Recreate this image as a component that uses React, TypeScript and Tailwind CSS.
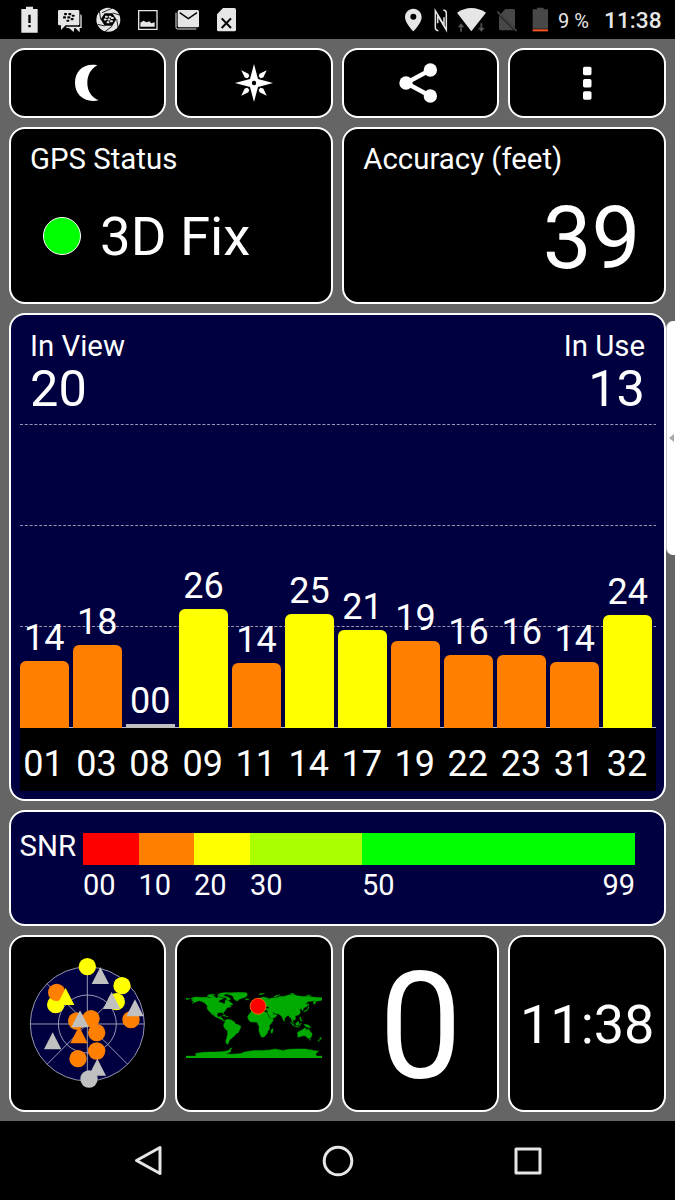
import type { ReactNode } from "react"
import clsx from "clsx"

interface Satellite {
  prn: string
  snr: string
  height: number
}

const satellites: Satellite[] = [
  { prn: "01", snr: "14", height: 67 },
  { prn: "03", snr: "18", height: 83.5 },
  { prn: "08", snr: "00", height: 4.5 },
  { prn: "09", snr: "26", height: 119 },
  { prn: "11", snr: "14", height: 65 },
  { prn: "14", snr: "25", height: 114.5 },
  { prn: "17", snr: "21", height: 98 },
  { prn: "19", snr: "19", height: 87 },
  { prn: "22", snr: "16", height: 73 },
  { prn: "23", snr: "16", height: 73 },
  { prn: "31", snr: "14", height: 66 },
  { prn: "32", snr: "24", height: 113 },
]

function barColor(snr: string) {
  const value = Number(snr)
  if (value >= 20) return "bg-[#ffff00] rounded-t-[6px]"
  if (value >= 10) return "bg-[#ff8000] rounded-t-[6px]"
  return "bg-[#c0c0c0]"
}

const snrScale = [
  { label: "00", style: "w-[55.5px] bg-[#ff0000]", labelStyle: "w-[55.5px]" },
  { label: "10", style: "w-[55.5px] bg-[#ff8000]", labelStyle: "w-[55.5px]" },
  { label: "20", style: "w-[56px] bg-[#ffff00]", labelStyle: "w-[56px]" },
  { label: "30", style: "w-[112px] bg-[#aaff00]", labelStyle: "w-[112px]" },
  { label: "50", style: "w-[273px] bg-[#00ff00]", labelStyle: "flex-1" },
]

// [x, y, color]
const skyDots: [number, number, string][] = [
  [262, 109, "#ffff00"],
  [366, 166, "#ffff00"],
  [349, 214, "#ffff00"],
  [167, 223, "#ffff00"],
  [170, 186, "#ff8000"],
  [393, 268, "#ff8000"],
  [230, 272, "#ff8000"],
  [273, 265, "#ff8000"],
  [290, 307, "#ff8000"],
  [290, 362, "#ff8000"],
  [234, 385, "#ff8000"],
]

const skyTriangles: [number, number, string][] = [
  [301, 136, "#c0c0c0"],
  [197, 199, "#ffff00"],
  [335, 211, "#c0c0c0"],
  [405, 233, "#c0c0c0"],
  [240, 266, "#c0c0c0"],
  [237, 314, "#ff8000"],
  [158, 332, "#c0c0c0"],
  [292, 411, "#c0c0c0"],
]

// lon,lat outlines
const landmasses = [
  // north america
  "-168,66 -162,69 -156,71 -141,70 -128,70 -115,68 -108,68 -97,68 -95,72 -90,69 -82,69 -82,66 -87,64 -94,60 -92,57 -82,55 -80,51 -77,56 -77,62 -70,62 -65,59 -61,56 -56,52 -60,50 -66,50 -60,46 -66,44 -70,43 -74,40 -76,35 -81,31 -80,25 -83,29 -90,30 -97,28 -98,22 -95,18 -91,19 -87,21 -89,16 -83,15 -83,10 -78,9 -80,7 -86,11 -92,14 -97,16 -105,20 -109,26 -113,31 -109,23 -112,25 -117,32 -121,35 -124,40 -124,48 -131,55 -138,59 -146,61 -152,59 -156,57 -164,54 -158,59 -165,61 -162,64",
  // canadian arctic
  "-125,72 -120,76 -110,75 -105,73 -101,69 -115,69 -118,71",
  "-98,74 -90,76 -80,75 -86,71 -92,72",
  "-90,73 -80,74 -70,71 -62,66 -66,62 -74,64 -72,68 -80,70",
  "-96,77 -90,81 -75,83 -62,82 -75,79 -80,76",
  "-120,77 -110,78 -104,77 -112,75",
  // greenland
  "-72,78 -60,82 -40,83.5 -20,82 -18,77 -22,71 -30,68 -40,65 -44,60 -50,62 -54,67 -56,73 -62,76",
  "-24,65 -20,66.5 -14,66 -15,64 -20,63",
  // cuba and hispaniola
  "-84,22 -79,23.5 -74,20.5 -78,20",
  "-74,19.5 -69,19.5 -69,18 -74,18",
  // south america
  "-78,8 -72,12 -62,11 -52,5 -50,0 -44,-2 -35,-6 -37,-12 -39,-17 -42,-23 -48,-26 -53,-33 -58,-35 -58,-38 -63,-40 -66,-45 -68,-50 -69,-54 -74,-52 -75,-46 -73,-38 -71,-30 -70,-19 -76,-14 -81,-6 -80,0 -77,4",
  // africa
  "-17,15 -17,21 -10,30 -6,35 3,37 10,37 11,33 20,31 31,31 34,28 37,21 43,12 51,12 47,4 40,-4 40,-15 35,-20 35,-24 31,-29 27,-34 19,-35 15,-27 12,-17 13,-8 9,0 8,4 -3,5 -9,5 -14,9",
  "44,-17 49,-12 50,-16 47,-25 44,-23",
  // eurasia
  "-9,37 -9,43 -1,44 -4,48 2,51 8,54 8,57 11,55 20,55 24,59 22,60 22,64 17,61 12,56 6,58 5,62 14,68 25,71 40,67 42,66 34,66 38,64 45,68 60,69 68,73 73,72 80,73 90,76 104,78 113,74 130,72 140,73 160,70 180,69 180,65 178,62 170,60 163,60 162,55 157,51 156,58 163,62 155,60 143,59 135,54 141,52 139,46 130,42 129,36 126,35 125,40 121,40 118,38 122,37 120,34 122,30 118,24 108,21 109,12 105,9 100,14 104,1 98,9 98,16 94,16 91,22 87,21 80,15 80,10 77,8 73,19 67,25 57,27 51,29 48,30 52,24 56,26 60,22 55,17 44,12.5 42,17 35,28 35,36 27,37 27,40 41,41 37,45 31,46 28,42 23,37 19,42 13,45 16,38 10,44 3,43 0,39 -5,36",
  "-5,50 1,51 0,54 -3,59 -6,57",
  "-10,52 -6,52 -6,55 -10,54",
  "12,78 16,80 27,80 18,77",
  "52,71 58,75 68,77 60,73 56,70.5",
  "95,79 100,81 105,79",
  "138,75 150,76 144,73.5",
  // japan and sakhalin
  "130,31 132,34 139,37 141,41 142,45 145,43 141,39 140,35",
  "142,46 142,54 144,50",
  "80,9 82,7 80,6",
  // south-east asia
  "95,5 103,-1 106,-6 102,-4",
  "109,1 117,7 118,3 116,-4 110,-3",
  "105,-6 114,-7 120,-9 112,-8.5",
  "119,0 125,1.5 121,-1 122,-5 119,-4",
  "120,18 122,18 124,12 126,7 122,8 121,13",
  "131,-1 138,-2 145,-4 150,-10 143,-9 138,-8 133,-4",
  // australia and new zealand
  "114,-22 122,-18 129,-14 132,-11 137,-12 136,-15 141,-17 142,-11 146,-19 153,-26 151,-33 147,-39 140,-37 137,-33 131,-31 124,-33 115,-35",
  "145,-41 148,-41 147,-44",
  "173,-35 178,-38 175,-41 173,-38",
  "172,-41 174,-42 168,-46.5 167,-45",
  "-180,68 -170,66 -175,64 -180,65",
  // antarctica
  "-180,-85 -155,-85 -153,-82 -156,-79 -148,-77 -135,-75 -115,-74 -100,-74 -80,-73 -68,-70 -63,-65 -58,-63 -62,-68 -62,-74 -75,-78 -60,-80 -35,-78 -28,-75 -15,-72 0,-70 20,-70 40,-69 55,-66 70,-69 75,-70 90,-67 110,-66 135,-66 150,-69 170,-72 164,-77 162,-81 165,-85 180,-85 180,-90 -180,-90",
]

function Card({ className, children }: { className?: string; children: ReactNode }) {
  return (
    <div className={clsx("rounded-[16px] border-[2.5px] border-white", className)}>
      {children}
    </div>
  )
}

function BbmDots({ x, y }: { x: number; y: number }) {
  const dots = [[4, 0], [17, 0], [1, 10], [14, 10], [27, 5], [24, 15], [11, 20]]
  return (
    <g fill="#000" transform={`translate(${x} ${y})`}>
      {dots.map(([dx, dy]) => (
        <rect key={`${dx}-${dy}`} x={dx} y={dy} width="9" height="6.5" rx="2.5" />
      ))}
    </g>
  )
}

function StatusBar() {
  return (
    <div className="flex h-[39px] items-center bg-black pl-[10px] text-[#e6e6e6]">
      <svg className="h-[39px] w-[39px]" viewBox="30 0 117 117" fill="currentColor">
        <path d="M64 27h14v-7h21v7h14v71H64z" />
        <path d="M85 44h7v25h-7zM85 75h7v7h-7z" fill="#000" />
      </svg>
      <svg className="h-[39px] w-[39px]" viewBox="147 0 117 117" fill="currentColor">
        <path d="M241 43q4 1 4 4v37h-6v13l-13-13h-3l-2 12-14-12h-8v-4h42z" />
        <path d="M178 30h56q4 0 4 4v38q0 4-4 4h-37l-14 14V76h-5q-4 0-4-4V34q0-4 4-4z" />
        <BbmDots x={188} y={39} />
      </svg>
      <svg className="h-[39px] w-[39px]" viewBox="264 0 117 117" fill="currentColor">
        <circle cx="325" cy="59" r="36" />
        <path d="M314 40h23l12 18-12 19h-23l-12-19z" fill="#000" />
        <path
          d="M306 38l32-14M338 39l21 6M350 58l5 27M337 78l-22 17M314 78l-21-5M302 58l-4-26"
          stroke="#000"
          strokeWidth="2.5"
          fill="none"
        />
        <g transform="translate(325 59) scale(.85)">
          {[[-12, -14], [1, -14], [-16, -4], [-3, -4], [9, -9], [6, 2], [-6, 6]].map(([x, y]) => (
            <rect key={`${x}${y}`} x={x} y={y} width="10" height="7" rx="2.5" />
          ))}
        </g>
      </svg>
      <svg className="h-[39px] w-[39px]" viewBox="381 0 117 117" fill="currentColor">
        <path d="M414 30h59v60h-59zm4 4v52h51V34z" fillRule="evenodd" />
        <path d="M421 80V68l9-6 10 5 8-3 6 6 10-3v13z" />
      </svg>
      <svg className="h-[39px] w-[39px]" viewBox="498 0 117 117" fill="currentColor">
        <path d="M528 38v44q0 5 5 5h56" fill="none" stroke="currentColor" strokeWidth="3" />
        <rect x="533" y="30" width="64" height="52" rx="5" />
        <path d="M539 38l26 18 26-18" fill="none" stroke="#000" strokeWidth="4" />
      </svg>
      <svg className="h-[39px] w-[39px]" viewBox="615 0 117 117" fill="currentColor">
        <path d="M669 24h34q5 0 5 5v60q0 5-5 5h-47q-5 0-5-5V43z" />
        <path d="M665 55l28 29M693 55l-28 29" stroke="#000" strokeWidth="6" />
      </svg>

      <svg className="ml-[156px] h-[39px] w-[28px]" viewBox="30 0 84 117" fill="currentColor">
        <path
          d="M70 26c-14 0-25 11-25 25 0 19 25 43 25 43s25-24 25-43c0-14-11-25-25-25zm0 15a9 9 0 110 18 9 9 0 010-18z"
          fillRule="evenodd"
        />
      </svg>
      <svg className="h-[39px] w-[24px]" viewBox="114 0 72 117" fill="none" stroke="currentColor" strokeWidth="4.5">
        <path d="M145 92q-9-1-9-9V32l26 44V52" />
        <path d="M160 30q9 1 9 9v51l-26-44v24" />
      </svg>
      <svg className="h-[39px] w-[39px]" viewBox="186 0 117 117" fill="currentColor">
        <path d="M201 38q43-28 87 0l-44 56z" />
        <path
          d="M213 69l11 13h-8v14h-6V82h-8zM274 96l-11-13h8V69h6v14h8z"
          fill="#555"
          stroke="#000"
          strokeWidth="1"
        />
      </svg>
      <svg className="h-[39px] w-[32px]" viewBox="303 0 96 117" fill="#484848">
        <path d="M346 27h24q5 0 5 5v53l-43-43zM327 46l45 45h-40q-5 0-5-5z" />
        <path d="M322 35l58 58" stroke="#484848" strokeWidth="5" />
      </svg>
      <svg className="h-[39px] w-[30px]" viewBox="399 0 90 117" fill="#484848">
        <path d="M428 28h13v-5h20v5h13v58h-46z" />
        <path d="M428 88h46v6h-46z" fill="#ff5722" />
      </svg>
      <span className="ml-[5px] w-[46px] pt-[3px] text-[20px] leading-none">9 %</span>
      <span className="pt-[3px] text-[22.7px] leading-none font-medium">11:38</span>
    </div>
  )
}

function Toolbar() {
  return (
    <div className="grid h-[70px] grid-cols-4 gap-[9px]">
      <Card className="flex items-center justify-center bg-black">
        <svg className="h-10 w-10" viewBox="201 189 120 120" fill="#fff">
          <path d="M292 196C250 188 225 215 225 249S252 310 296 301C273 291 262 272 262 249S272 207 292 196z" />
        </svg>
      </Card>
      <Card className="flex items-center justify-center bg-black">
        <svg className="h-10 w-10" viewBox="-20 -20 40 40" fill="#fff">
          <path
            d="M0-19L4-4 19 0 4 4 0 19-4 4-19 0-4-4zM0-2.2a2.2 2.2 0 100 4.4 2.2 2.2 0 000-4.4z"
            fillRule="evenodd"
          />
          {[45, 135, 225, 315].map((deg) => (
            <path key={deg} d="M0-18L2.6-10.5 1.4-8h-2.8L-2.6-10.5z" transform={`rotate(${deg})`} />
          ))}
        </svg>
      </Card>
      <Card className="flex items-center justify-center bg-black">
        <svg className="h-11 w-11" viewBox="27 183 132 132" fill="#fff">
          <path d="M121 210L48 249l73 39" fill="none" stroke="#fff" strokeWidth="13" />
          <circle cx="121" cy="210" r="20" />
          <circle cx="48" cy="249" r="20" />
          <circle cx="121" cy="288" r="20" />
        </svg>
      </Card>
      <Card className="flex items-center justify-center bg-black">
        <svg className="h-10 w-10" viewBox="532 189 120 120" fill="#fff">
          <rect x="580" y="200" width="25.5" height="25.5" rx="5" />
          <rect x="580" y="237" width="25.5" height="25.5" rx="5" />
          <rect x="580" y="273.5" width="25.5" height="25.5" rx="5" />
        </svg>
      </Card>
    </div>
  )
}

function SatelliteChart() {
  return (
    <Card className="flex h-[488px] flex-col bg-[#000040] pr-[8px] pl-[9px]">
      <div className="flex h-[109px] justify-between pt-[16px] pr-[11px] pl-[10.5px]">
        <div>
          <p className="text-[29.4px] leading-[30px]">In View</p>
          <p className="text-[50.5px] leading-[56px]">20</p>
        </div>
        <div className="text-right">
          <p className="text-[29.4px] leading-[30px]">In Use</p>
          <p className="text-[50.5px] leading-[56px]">13</p>
        </div>
      </div>
      <div className="relative h-[304px]">
        <svg className="absolute inset-0 h-[304px] w-full" stroke="#9696b4">
          <path d="M0 .5h636M0 101.5h636M0 202.5h636" strokeDasharray="3 1.8" />
          <path d="M0 303.5h640" stroke="#b8b8c8" />
        </svg>
        <div className="relative grid h-full grid-cols-12">
          {satellites.map((sat) => (
            <div key={sat.prn} className="flex flex-col items-center justify-end pr-[3.5px]">
              <span className="mb-[2px] text-[36px] leading-[42px]">{sat.snr}</span>
              <div className={clsx("w-[49px]", barColor(sat.snr))} style={{ height: sat.height }} />
            </div>
          ))}
        </div>
      </div>
      <div className="grid h-[63px] grid-cols-12 items-center bg-black pt-[9px]">
        {satellites.map((sat) => (
          <span key={sat.prn} className="pr-[5px] text-center text-[36px] leading-[42px]">
            {sat.prn}
          </span>
        ))}
      </div>
    </Card>
  )
}

function SnrLegend() {
  return (
    <Card className="flex h-[116px] bg-[#000040] pt-[21px] pl-[9px] text-[29.4px]">
      <span className="w-[63.5px] leading-[26px]">SNR</span>
      <div className="w-[552px]">
        <div className="flex h-[32px]">
          {snrScale.map((step) => (
            <div key={step.label} className={step.style} />
          ))}
        </div>
        <div className="flex pt-[5px] text-[29px] leading-[30px]">
          {snrScale.map((step) => (
            <span key={step.label} className={step.labelStyle}>
              {step.label}
            </span>
          ))}
          <span>99</span>
        </div>
      </div>
    </Card>
  )
}

function SkyPlot() {
  return (
    <svg className="h-[130px] w-[130px] overflow-visible" viewBox="66 86 390 390">
      <circle cx="262" cy="281" r="171" fill="#000040" />
      <g stroke="#b4b4c8" strokeWidth="2.5" fill="none">
        <circle cx="262" cy="281" r="171" />
        <circle cx="262" cy="281" r="87" />
        <path d="M262 110v342M91 281h342M141 160l242 242M383 160L141 402" />
      </g>
      {skyDots.map(([x, y, color]) => (
        <circle key={`${x}-${y}`} cx={x} cy={y} r="26" fill={color} />
      ))}
      {skyTriangles.map(([x, y, color]) => (
        <path key={`${x}-${y}`} d="M0-26L26 25h-52z" fill={color} transform={`translate(${x} ${y})`} />
      ))}
      <circle cx="267" cy="446" r="26" fill="#c0c0c0" />
    </svg>
  )
}

function WorldMap() {
  return (
    <svg className="mt-[2px] h-[66px] w-[136.5px]" viewBox="-180 -84 360 174">
      <g transform="scale(1 -1)" fill="#00aa00" stroke="#00aa00" strokeWidth="1">
        {landmasses.map((points) => (
          <polygon key={points} points={points} />
        ))}
        <path d="M-180-87.5h360" strokeWidth="5" />
      </g>
      <circle cx="10" cy="-46.5" r="21" fill="#ff0000" stroke="#ff8000" strokeWidth="2" />
    </svg>
  )
}

function NavBar() {
  return (
    <div className="flex h-[79px] items-center justify-center gap-[158px] bg-black">
      <svg className="h-8 w-8" viewBox="0 1 32 32" fill="none" stroke="#e6e6e6" strokeWidth="3" strokeLinejoin="round">
        <path d="M4.5 16.5L28 3.5v26z" />
      </svg>
      <svg className="h-8 w-8" viewBox="0 1 32 32" fill="none" stroke="#e6e6e6" strokeWidth="3">
        <circle cx="16" cy="17" r="13.8" />
      </svg>
      <svg className="h-8 w-8" viewBox="0 1 32 32" fill="none" stroke="#e6e6e6" strokeWidth="3" strokeLinejoin="round">
        <path d="M4 5h24v24H4z" />
      </svg>
    </div>
  )
}

export default function App() {
  return (
    <div className="relative flex h-[1200px] w-[675px] flex-col overflow-hidden bg-[#656565] font-[Roboto,sans-serif] text-white">
      <StatusBar />

      <div className="flex h-[1082px] flex-col gap-[9px] py-[9px] pr-[9px] pl-[8.5px]">
        <Toolbar />

        <div className="grid h-[177px] grid-cols-2 gap-[9px]">
          <Card className="bg-black px-[19.5px] pt-[13px]">
            <p className="text-[29.4px] leading-[34px]">GPS Status</p>
            <div className="mt-[27px] flex items-center gap-[19.5px] pl-[12.5px]">
              <span className="h-[38px] w-[38px] rounded-full border border-white bg-[#00ff00]" />
              <span className="text-[54.5px] leading-[66px]">3D Fix</span>
            </div>
          </Card>
          <Card className="bg-black px-[19.5px] pt-[13px]">
            <p className="text-[29.4px] leading-[34px]">Accuracy (feet)</p>
            <p className="mt-[12px] pr-[4px] text-right text-[87px] leading-[100px]">39</p>
          </Card>
        </div>

        <SatelliteChart />
        <SnrLegend />

        <div className="grid h-[177px] grid-cols-4 gap-[9px]">
          <Card className="flex items-center justify-center bg-black">
            <SkyPlot />
          </Card>
          <Card className="flex items-center justify-center bg-black">
            <WorldMap />
          </Card>
          <Card className="flex items-center justify-center bg-black pt-[8px] text-[148px] leading-none">
            0
          </Card>
          <Card className="flex items-center justify-center bg-black pt-[3px] text-[54px] leading-none">
            11:38
          </Card>
        </div>
      </div>

      <NavBar />

      {/* Edge panel handle */}
      <div className="absolute top-[321px] right-0 flex h-[234px] w-[9px] items-center justify-center rounded-l-[7px] border-l border-[#c4c4c4] bg-white">
        <svg className="h-[8px] w-[5px]" viewBox="0 0 5 8" fill="#a8a8a8">
          <path d="M0 4l5-4v8z" />
        </svg>
      </div>
    </div>
  )
}
